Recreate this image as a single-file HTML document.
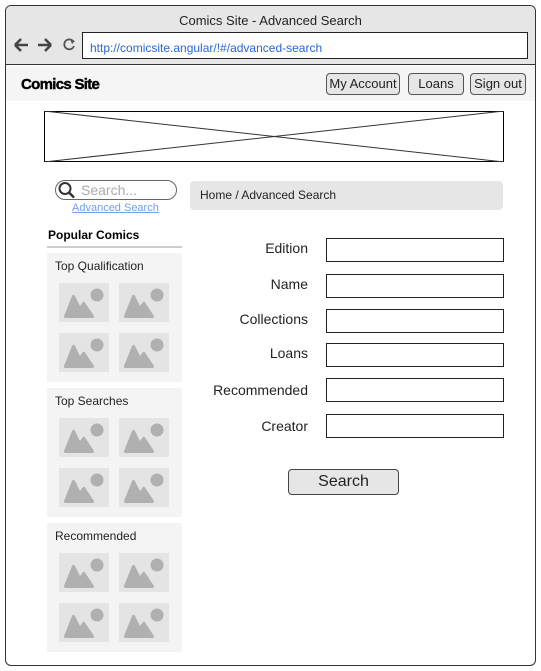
<!DOCTYPE html>
<html><head><meta charset="utf-8"><style>
*{box-sizing:border-box;margin:0;padding:0}
body{width:541px;height:671px;background:#fff;font-family:"Liberation Sans",Arial,sans-serif;position:relative;overflow:hidden;color:#000}
.a{position:absolute}
.win{left:5px;top:5px;width:531px;height:661px;border:1px solid #333;border-radius:6px;overflow:hidden;background:#fff}
.btn{position:absolute;top:73px;height:22px;border:1px solid #555;border-radius:4px;background:#e6e6e6;font-size:13px;text-align:center;line-height:20px;color:#222}
.lbl{position:absolute;right:233px;font-size:14px;color:#222;text-align:right}
.inp{position:absolute;left:326px;width:178px;height:24px;border:1px solid #222;background:#fff}
.panel{position:absolute;left:47px;width:135px;height:129px;background:#f4f4f4}
.panel .t{position:absolute;left:8px;top:6px;font-size:12px;color:#222}
</style></head><body>
<div class="a win"></div>
<div class="a" style="left:6px;top:6px;width:529px;height:59px;background:#e6e6e6;border-radius:5px 5px 0 0;border-bottom:1px solid #333"></div>
<div class="a" style="left:0;width:541px;top:13px;text-align:center;font-size:13px;color:#222">Comics Site - Advanced Search</div>
<svg class="a" style="left:12px;top:36px" width="70" height="18" viewBox="0 0 70 18">
<path d="M3 9H16M3 9L9 3M3 9L9 15" stroke="#444" stroke-width="2.6" fill="none"/>
<path d="M26 9H39M39 9L33 3M39 9L33 15" stroke="#444" stroke-width="2.6" fill="none"/>
<path d="M61 5A5 5 0 1 0 62 10" stroke="#555" stroke-width="1.8" fill="none"/><path d="M58 3L63 5L60 8Z" fill="#555"/>
</svg>
<div class="a" style="left:82px;top:32px;width:446px;height:27px;border:1px solid #222;background:#fff;font-size:12px;color:#2a66d8;padding:8px 0 0 7px">http://comicsite.angular/!#/advanced-search</div>
<div class="a" style="left:6px;top:66px;width:529px;height:35px;background:#f5f5f5"></div>
<div class="a" style="left:21px;top:76px;font-size:15px;font-weight:bold;letter-spacing:-0.7px;-webkit-text-stroke:0.4px #000">Comics Site</div>
<div class="btn" style="left:326px;width:74px">My Account</div>
<div class="btn" style="left:408px;width:56px">Loans</div>
<div class="btn" style="left:470px;width:56px">Sign out</div>
<svg class="a" style="left:44px;top:111px" width="460" height="51"><rect x="0.5" y="0.5" width="459" height="50" fill="#fff" stroke="#000"/><path d="M0 0L460 51M460 0L0 51" stroke="#333" stroke-width="1"/></svg>
<div class="a" style="left:55px;top:180px;width:122px;height:20px;border:1px solid #666;border-radius:10px;background:#fff"></div>
<svg class="a" style="left:57px;top:181px" width="22" height="18"><circle cx="8" cy="7.5" r="5.5" stroke="#333" stroke-width="2" fill="none"/><path d="M12 11.5L17 16.5" stroke="#333" stroke-width="2.5"/></svg>
<div class="a" style="left:81px;top:182px;font-size:14px;color:#aaa">Search...</div>
<div class="a" style="left:72px;top:202px;font-size:11px;color:#6f9ff0;text-decoration:underline">Advanced Search</div>
<div class="a" style="left:190px;top:181px;width:313px;height:29px;background:#e6e6e6;border-radius:4px;font-size:12px;color:#222;padding:7px 0 0 10px">Home / Advanced Search</div>
<div class="a" style="left:48px;top:228px;font-size:12px;font-weight:bold">Popular Comics</div>
<div class="a" style="left:47px;top:246px;width:135px;height:2px;background:#ccc"></div>
<div class="panel" style="top:253px"><div class="t">Top Qualification</div></div>
<div class="panel" style="top:388px"><div class="t">Top Searches</div></div>
<div class="panel" style="top:523px"><div class="t">Recommended</div></div>
<svg width="0" height="0" style="position:absolute"><defs><g id="ic"><rect width="50" height="39" fill="#e4e4e4"/><circle cx="38" cy="12" r="6.5" fill="#b0b0b0"/><path d="M5 33L13 13Q14.5 10.5 16 13L21 23L24 19Q25 18 26 19.5L35 33Q35.5 35 33 35H7Q4.5 35 5 33Z" fill="#b0b0b0"/></g></defs></svg>
<svg class="a" style="left:59px;top:283px" width="110" height="370">
<use href="#ic" x="0" y="0"/><use href="#ic" x="60" y="0"/><use href="#ic" x="0" y="50"/><use href="#ic" x="60" y="50"/>
<use href="#ic" x="0" y="135"/><use href="#ic" x="60" y="135"/><use href="#ic" x="0" y="185"/><use href="#ic" x="60" y="185"/>
<use href="#ic" x="0" y="270"/><use href="#ic" x="60" y="270"/><use href="#ic" x="0" y="320"/><use href="#ic" x="60" y="320"/>
</svg>
<div class="lbl" style="top:240px">Edition</div><div class="inp" style="top:238px"></div>
<div class="lbl" style="top:276px">Name</div><div class="inp" style="top:274px"></div>
<div class="lbl" style="top:311px">Collections</div><div class="inp" style="top:309px"></div>
<div class="lbl" style="top:345px">Loans</div><div class="inp" style="top:343px"></div>
<div class="lbl" style="top:382px">Recommended</div><div class="inp" style="top:378px"></div>
<div class="lbl" style="top:418px">Creator</div><div class="inp" style="top:414px"></div>
<div class="a" style="left:288px;top:469px;width:111px;height:26px;border:1px solid #444;border-radius:4px;background:#e6e6e6;font-size:16px;text-align:center;line-height:24px;color:#222">Search</div>
</body></html>
